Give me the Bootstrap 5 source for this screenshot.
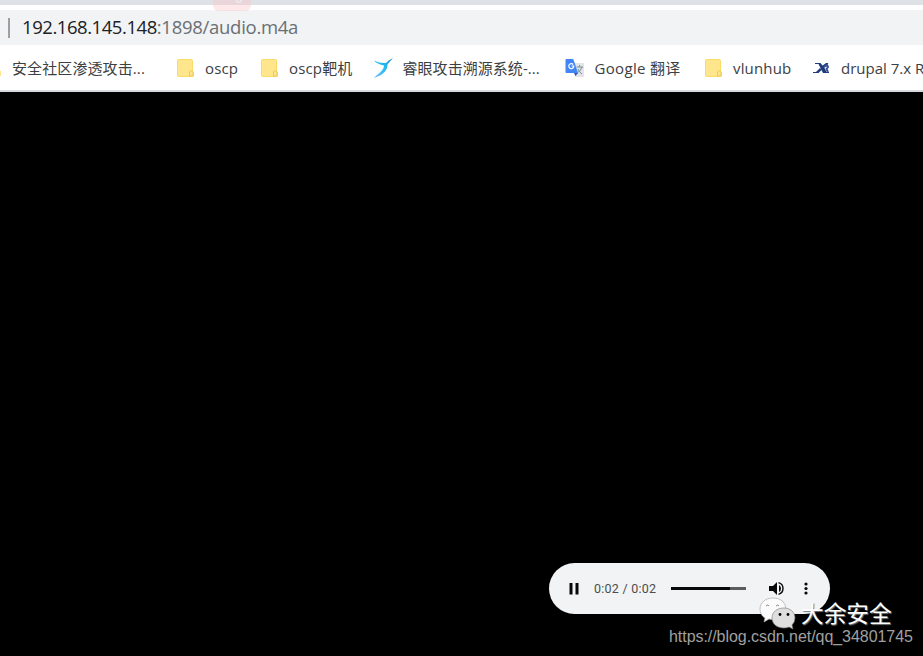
<!DOCTYPE html>
<html lang="zh-CN">
<head>
<meta charset="utf-8">
<title>audio.m4a</title>
<link href="https://cdn.jsdelivr.net/npm/bootstrap@5.3.0/dist/css/bootstrap.min.css" rel="stylesheet">
<style>
body{width:923px;height:656px;background:#000;font-family:"Open Sans","Noto Sans CJK SC",sans-serif}
svg{display:block;flex:none}
.tabstrip{height:10px;background:linear-gradient(#dee1e6 5px,#fff 5px)}
.tab-hint{left:213px;top:0;width:38px;height:11px;background:rgba(255,195,200,.38);border-radius:0 0 6px 6px;z-index:2}
.address{height:35px;background:#f1f3f4;font-size:18.5px;line-height:33px;color:#6b6f74;padding-left:8px}
.address .host,.address .path{padding-bottom:2px}
.caret-line{width:2px;height:20px;background:#9d9fa2;margin-right:12px}
.host{color:#202124;letter-spacing:-.45px}
.path{letter-spacing:-.28px}
.bookmarks{height:47px;border-bottom:2px solid #d7dade;display:grid;grid-template-columns:176px 84px 112px 192px 140px 108px 111px;font-size:15px;line-height:24px;color:#3c4043}
.bm{padding-top:1px;height:45px}
.bm svg{width:29px}
.bm-first svg{width:12px}
.bm-first span{letter-spacing:.1px}
.bm-folder span{letter-spacing:.15px}
.bm-sky svg,.bm-google svg{width:30.5px}
.bm-sky span{letter-spacing:.05px}
.bm-google span{letter-spacing:.33px}
.viewer{height:564px}
.player{left:549px;top:471px;width:281px;height:51px;border-radius:26px;background:#f1f3f4;padding-left:17px}
.clock{font:12.5px Roboto,sans-serif;color:#4b4d4f;margin-left:12px;width:77px;letter-spacing:.25px}
.track{width:75px;height:3px;background:linear-gradient(90deg,#080808 59px,#5c5c5c 59px)}
.volume{margin-left:23px}
.brand{left:759px;top:504px}
.brand-name{font:22.7px/30px "Noto Sans CJK SC",sans-serif;color:#fff;text-shadow:1px 1px 1px #777;margin-left:5px}
.link-mark{left:669px;top:535px;font:16px/20px "Liberation Sans",sans-serif;color:#a0a0a0;letter-spacing:-.05px}
</style>
</head>
<body class="overflow-hidden position-relative">
<svg width="0" height="0" class="position-absolute"><defs><g id="folder"><path d="M2.500 1.500h13q1 0 1 1v11l1 1v3.500q0 .5-.8.5H2.500q-1 0-1-1V2.500q0-1 1-1z" fill="#ffe68d" stroke="#fadb68"/><path d="M13.500 18v-4q0-1 1-1h1.500q1 0 1 1v3.500q0 .5-.5.5z" fill="#ffe68d" stroke="#eecb52"/></g></defs></svg>
<div class="tabstrip"></div>
<div class="tab-hint position-absolute"><svg width="38" height="10"><path d="M23 0q1 3 4 2l2-2" fill="none" stroke="#eeeaf0" stroke-width="1.500"/></svg></div>
<div class="address d-flex align-items-center"><span class="caret-line"></span><span class="host">192.168.145.148</span><span class="path">:1898/audio.m4a</span></div>
<nav class="bookmarks bg-white overflow-hidden text-nowrap">
<div class="bm bm-first d-flex align-items-center"><svg height="20"><path d="M0 13h1v5H0z" fill="#ffe68d"/></svg><span>安全社区渗透攻击...</span></div>
<div class="bm bm-folder d-flex align-items-center"><svg height="20"><use href="#folder"/></svg><span>oscp</span></div>
<div class="bm bm-folder d-flex align-items-center"><svg height="20"><use href="#folder"/></svg><span>oscp靶机</span></div>
<div class="bm bm-sky d-flex align-items-center"><svg height="22"><defs><linearGradient id="sky" x1="1" y1="0" x2="0" y2="1"><stop stop-color="#2c91c9"/><stop offset=".45" stop-color="#22bbf3"/><stop offset="1" stop-color="#78bdfa"/></linearGradient></defs><path d="M21 1 16.500 3.500 14 6Q8 6.500 2 3.500 5 7 12 8.500 12 12 8 15.500L1.500 21Q9 19 13 14.500 16 11 15.500 7.500 17.500 5 21 1z" fill="url(#sky)"/></svg><span>睿眼攻击溯源系统-...</span></div>
<div class="bm bm-google d-flex align-items-center"><svg height="20"><path d="M9 5h10q1 0 1 1v12q0 1-1 1h-8z" fill="#e2e4e7"/><path d="M12.500 9h6.500m-3.500-2v2m2.500 0q-1 4-5 6m1-4q1 3 4 5" stroke="#78909c" fill="none"/><path d="M2.500 1H9l1 2 4 12H2.500q-1 0-1-1V2q0-1 1-1z" fill="#4285f4"/><path d="M10 15h4l-2.500 3z" fill="#3553bd"/><path d="M9.200 6.500A2.500 2.500 0 1 0 9.800 8H7.500" stroke="#fff" stroke-width="1.200" fill="none"/></svg><span>Google 翻译</span></div>
<div class="bm bm-folder d-flex align-items-center"><svg height="20"><use href="#folder"/></svg><span>vlunhub</span></div>
<div class="bm d-flex align-items-center"><svg height="20"><path d="M3 5h5.500l4 5 2 4H17v1h-6L6.500 6H3zM1 14h3l4-4 1.500 2-3 3H1zM10 8l4-3h2.500l-4.500 5z" fill="#203b7c"/><path d="m12 9 3-2 1 2-1.500 2 1.500 3" fill="none" stroke="#385494" stroke-width="2"/></svg><span>drupal 7.x R</span></div>
</nav>
<main class="viewer position-relative">
<div class="player position-absolute d-flex align-items-center">
<svg width="16" height="16"><path d="M3.500 2h3v11.500h-3zm6 0h3v11.500h-3z" fill="#080808"/></svg>
<span class="clock">0:02 / 0:02</span><span class="track ms-0"></span>
<svg class="volume" width="16" height="16"><path d="M0 5h4l4-4v13L4 10H0z" fill="#080808"/><path d="M10 4v7q2-1 2-3.500T10 4z" fill="#080808"/><path d="M9.500 1.700q4.500 1.300 4.500 5.800t-4.500 5.800" fill="none" stroke="#080808" stroke-width="1.400"/></svg>
<svg class="ms-3" width="12" height="16"><g fill="#080808"><circle cx="5" cy="3" r="1.600"/><circle cx="5" cy="7.500" r="1.600"/><circle cx="5" cy="12" r="1.600"/></g></svg>
</div>
<div class="brand position-absolute d-flex align-items-center text-nowrap">
<svg width="37" height="34"><path d="M14 2C6 2 1 7 1 13q0 6 5 9l-1 4 5-3q3 1 6 0 10-1 11-10Q26 2 14 2z" fill="#fbfbfb" stroke="#aaa" stroke-width=".7"/><path d="M7 10q2-2 3 0m7 0q2-2 3 0" fill="none" stroke="#888"/><path d="M25 12c-7 0-12 4-12 10s5 10 12 10q3 0 5-1l4 2-1-4q3-3 3-7c0-6-5-10-11-10z" fill="#dedede" stroke="#777" stroke-width=".6"/><circle cx="21" cy="18.500" r="1.400"/><circle cx="29" cy="18.500" r="1.400"/></svg><span class="brand-name">大余安全</span>
</div>
<div class="link-mark position-absolute text-nowrap">https://blog.csdn.net/qq_34801745</div>
</main>
<script src="https://cdn.jsdelivr.net/npm/bootstrap@5.3.0/dist/js/bootstrap.bundle.min.js"></script>
</body>
</html>
